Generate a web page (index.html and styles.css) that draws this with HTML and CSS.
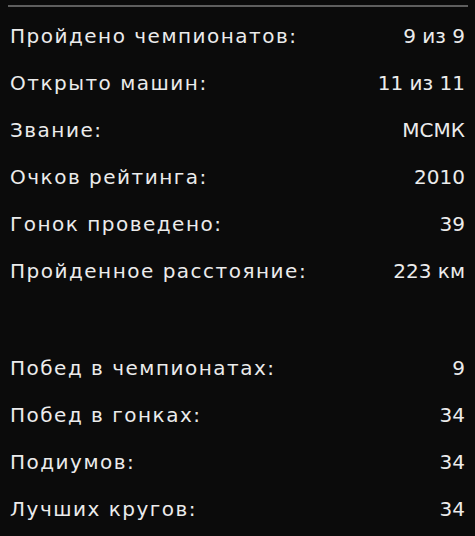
FILE: index.html
```html
<!DOCTYPE html>
<html lang="ru">
<head>
<meta charset="utf-8">
<link rel="stylesheet" href="styles.css">
</head>
<body>
<div class="panel">
  <div class="rule"></div>
  <ul class="stats">
    <li class="row"><span class="label">Пройдено чемпионатов:</span><span class="value">9 из 9</span></li>
    <li class="row"><span class="label">Открыто машин:</span><span class="value">11 из 11</span></li>
    <li class="row"><span class="label">Звание:</span><span class="value">МСМК</span></li>
    <li class="row"><span class="label">Очков рейтинга:</span><span class="value">2010</span></li>
    <li class="row"><span class="label">Гонок проведено:</span><span class="value">39</span></li>
    <li class="row"><span class="label">Пройденное расстояние:</span><span class="value">223 км</span></li>
  </ul>
  <ul class="stats second">
    <li class="row"><span class="label">Побед в чемпионатах:</span><span class="value">9</span></li>
    <li class="row"><span class="label">Побед в гонках:</span><span class="value">34</span></li>
    <li class="row"><span class="label">Подиумов:</span><span class="value">34</span></li>
    <li class="row"><span class="label">Лучших кругов:</span><span class="value">34</span></li>
  </ul>
</div>
</body>
</html>
```
FILE: styles.css
```css
html, body {
  margin: 0;
  padding: 0;
  background: #0b0b0b;
}
body {
  width: 475px;
  height: 536px;
  overflow: hidden;
  font-family: "DejaVu Sans", "Open Sans", sans-serif;
  color: #ececec;
}
.panel {
  padding: 5px 7px 0 8px;
}
.rule {
  height: 2px;
  background: #5e5e5e;
}
.stats {
  list-style: none;
  margin: 0;
  padding: 0 3px 0 2px;
}
.stats:first-of-type {
  margin-top: 5px;
}
.stats.second {
  margin-top: 50px;
}
.row {
  display: flex;
  justify-content: space-between;
  align-items: center;
  height: 47px;
  font-size: 20px;
  letter-spacing: 1.5px;
}
.value {
  letter-spacing: 0;
}
```
